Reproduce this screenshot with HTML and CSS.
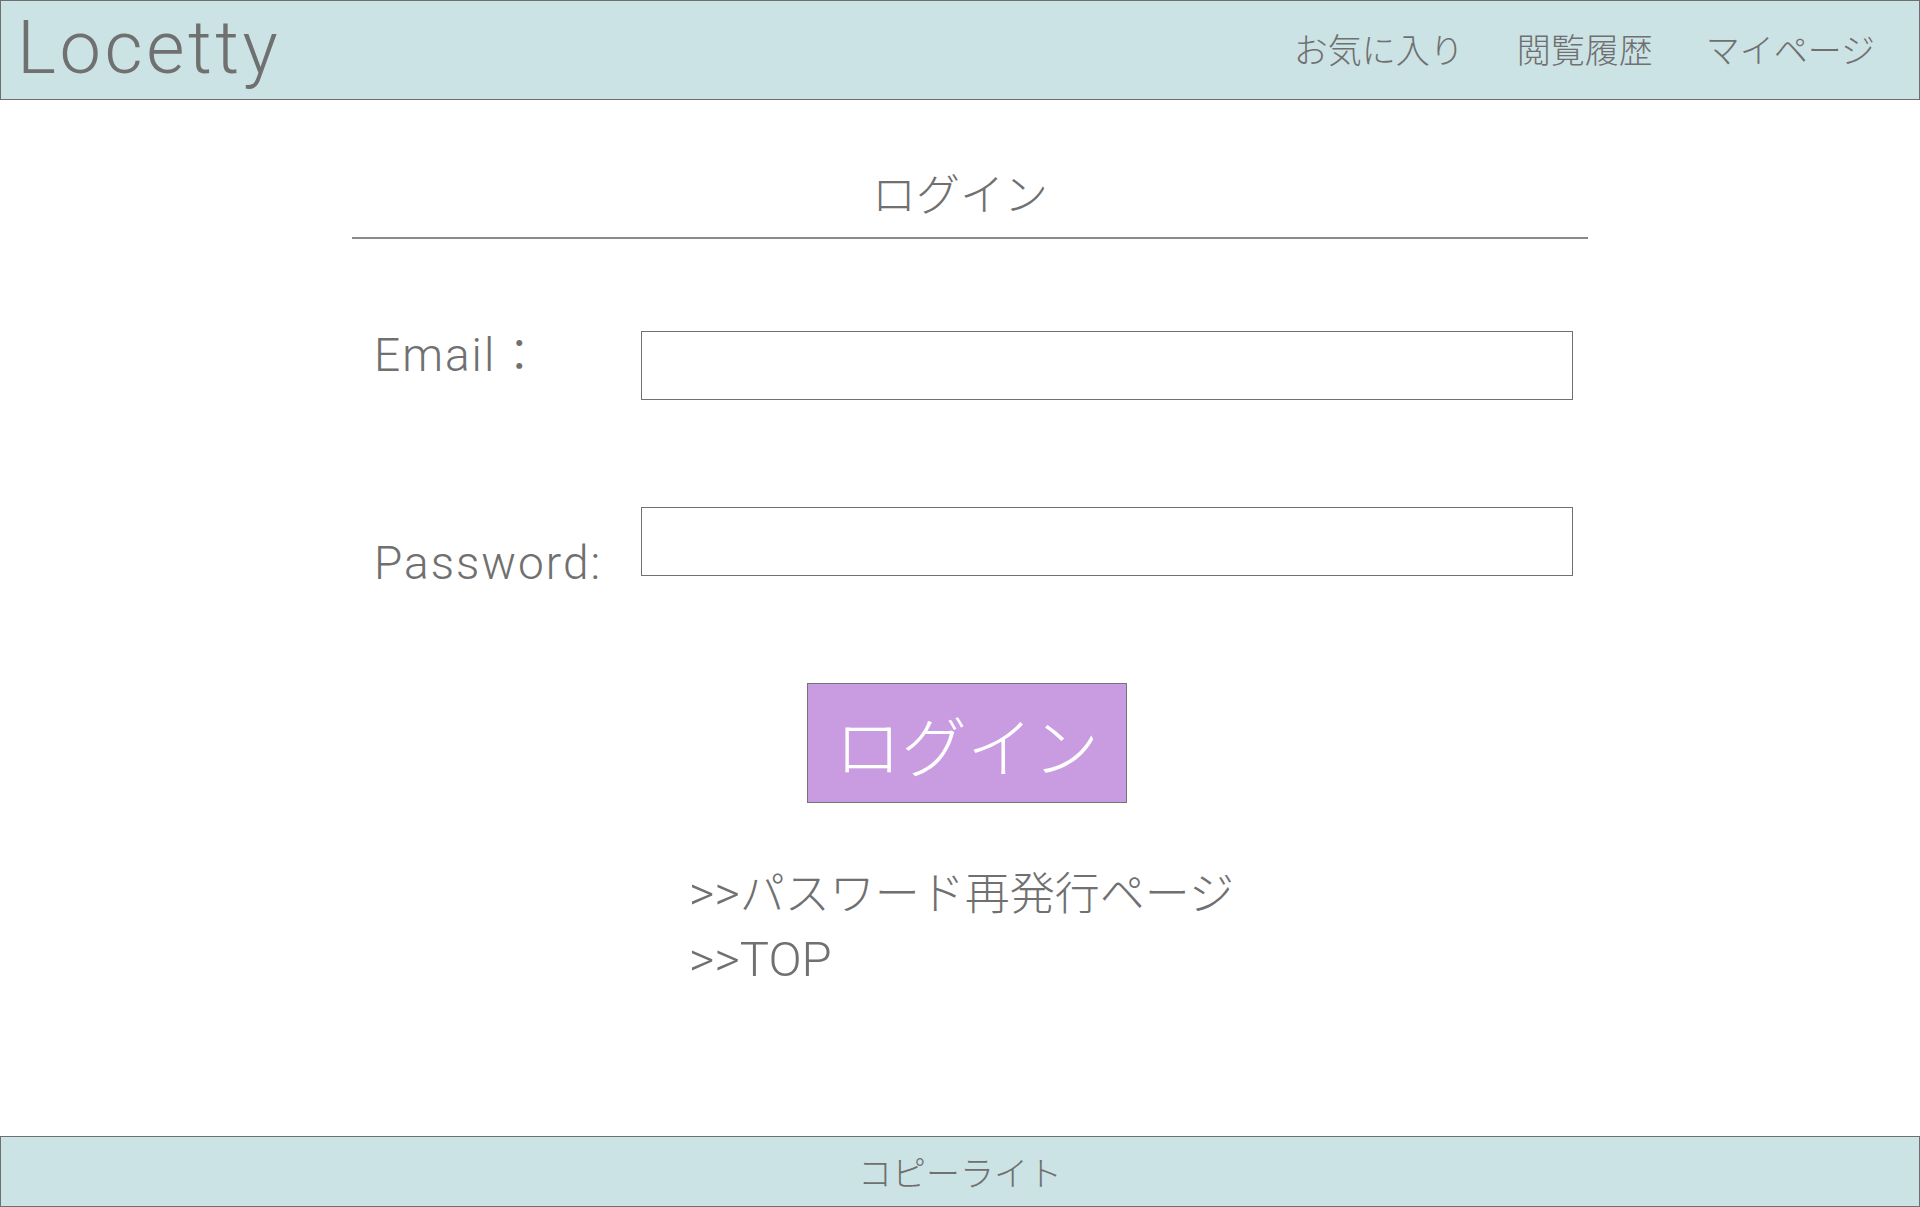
FILE: index.html
```html
<!DOCTYPE html>
<html lang="ja">
<head>
<meta charset="utf-8">
<title>ログイン | Locetty</title>
<link rel="stylesheet" href="styles.css">
</head>
<body>
<header class="site-header">
  <div class="logo">Locetty</div>
  <nav class="nav">
    <a class="nav-link" href="#">お気に入り</a>
    <a class="nav-link" href="#">閲覧履歴</a>
    <a class="nav-link" href="#">マイページ</a>
  </nav>
</header>
<main class="main">
  <section class="login">
    <h1 class="login-title">ログイン</h1>
    <form class="login-form">
      <div class="row row-email">
        <label class="label label-email" for="email">Email<span class="cjk">：</span></label>
        <input class="field" id="email" type="email">
      </div>
      <div class="row row-password">
        <label class="label label-password" for="password">Password:</label>
        <input class="field" id="password" type="password">
      </div>
      <div class="actions">
        <button class="btn" type="button">ログイン</button>
      </div>
    </form>
    <ul class="links">
      <li class="link-item"><a class="link" href="#"><span class="latin">&gt;&gt;</span>パスワード再発行ページ</a></li>
      <li class="link-item"><a class="link" href="#"><span class="latin">&gt;&gt;TOP</span></a></li>
    </ul>
  </section>
</main>
<footer class="site-footer">コピーライト</footer>
</body>
</html>
```
FILE: styles.css
```css
* { box-sizing: border-box; }

html, body {
  margin: 0;
  padding: 0;
}

body {
  min-height: 1207px;
  display: flex;
  flex-direction: column;
  background: #ffffff;
  color: #707070;
  font-family: "Noto Sans CJK JP", "Noto Sans CJK SC", sans-serif;
  font-weight: 300;
}

.site-header {
  flex: none;
  height: 100px;
  display: flex;
  align-items: center;
  justify-content: space-between;
  padding: 0 44px 0 16px;
  background: #cce3e5;
  border: 1px solid #6f6f6f;
}

.logo {
  font-family: "Roboto", "Noto Sans CJK JP", sans-serif;
  font-weight: 300;
  font-size: 74px;
  line-height: 1;
  letter-spacing: 3.5px;
  margin-bottom: 4px;
}

.nav {
  display: flex;
  gap: 53px;
  margin-bottom: 2px;
}

.nav-link {
  color: #707070;
  text-decoration: none;
  font-size: 34px;
  line-height: 1;
}

.main {
  flex: 1;
}

.login {
  width: 1236px;
  margin-left: calc(50% - 608px);
}

.login-title {
  margin: 70px 0 0;
  padding: 0 20px 23px 0;
  border-bottom: 2px solid #8a8a8a;
  text-align: center;
  font-size: 44px;
  font-weight: 300;
  line-height: 1;
}

.login-form {
  margin: 0;
}

.row {
  display: flex;
  align-items: flex-start;
}

.row-email { margin-top: 92px; }
.row-password { margin-top: 107px; }

.label {
  flex: 0 0 289px;
  padding-left: 22px;
  font-family: "Roboto", "Noto Sans CJK JP", sans-serif;
  font-weight: 300;
  font-size: 46px;
  line-height: 1;
  letter-spacing: 2px;
}

.label-email { margin-top: -3px; }
.label-password { margin-top: 33px; }

.cjk {
  font-family: "Noto Sans CJK JP", sans-serif;
  letter-spacing: 0;
}

.field {
  width: 932px;
  height: 69px;
  margin: 0;
  border: 1px solid #707070;
  border-radius: 0;
  background: #ffffff;
  font-size: 32px;
  outline: none;
}

.actions {
  display: flex;
  justify-content: center;
  padding-right: 6px;
  margin-top: 97px;
}

.btn {
  width: 320px;
  height: 120px;
  display: flex;
  align-items: center;
  justify-content: center;
  padding: 0;
  background: #c99be1;
  border: 1px solid #757575;
  border-radius: 0;
  color: #ffffff;
  font-family: "Noto Sans CJK JP", sans-serif;
  font-weight: 300;
  font-size: 66px;
  line-height: 1;
}

.links {
  list-style: none;
  margin: 55px 0 0;
  padding: 0 0 0 337px;
}

.link-item {
  height: 66px;
  line-height: 66px;
  font-size: 45px;
  white-space: nowrap;
}

.link {
  color: #707070;
  text-decoration: none;
}

.latin {
  font-family: "Roboto", sans-serif;
  font-weight: 300;
  font-size: 49px;
}

.site-footer {
  flex: none;
  height: 71px;
  display: flex;
  align-items: center;
  justify-content: center;
  background: #cce3e5;
  border: 1px solid #6f6f6f;
  font-size: 34px;
  line-height: 1;
}
```
